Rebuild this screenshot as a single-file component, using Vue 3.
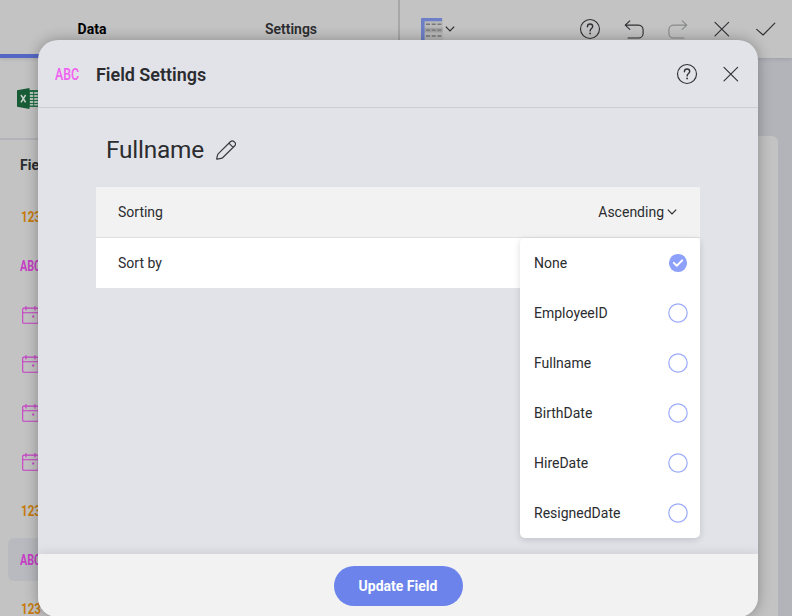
<script setup>
const fields = ['num', 'text', 'date', 'date', 'date', 'date', 'num', 'text', 'num']
const options = ['None', 'EmployeeID', 'Fullname', 'BirthDate', 'HireDate', 'ResignedDate']
const selected = 'None'
const selectedField = 7
</script>

<template>
  <div class="app">
    <header class="topbar">
      <div class="tabs">
        <div class="tab active">Data</div>
        <div class="tab">Settings</div>
      </div>
      <div class="tools">
        <div class="viz">
          <svg width="22" height="22" viewBox="0 0 22 22">
            <rect width="22" height="22" rx="1" fill="#b9b9b9" />
            <path d="M3.5 12.1h18" stroke="#a3a3a3" stroke-width="4.6" />
            <path d="M5 6.3h16M5 12.1h16M5 18h16" stroke="#777" stroke-width="1.4" stroke-dasharray="4 1.7" />
            <path d="M0 1a1 1 0 0 1 1-1h20v3.2H3.6V22H0z" fill="#6d7fc6" />
          </svg>
          <svg class="chev" width="10" height="6" viewBox="0 0 10 6"><path d="M.8.7 5 4.9 9.2.7" /></svg>
        </div>
        <div class="actions">
          <svg class="line" width="22" height="22" viewBox="0 0 22 22">
            <circle cx="11" cy="11" r="9.5" />
            <path class="q" d="M8.4 8.7c0-1.7 1.1-2.7 2.7-2.7s2.6 1 2.6 2.4c0 2.1-2.6 2-2.6 4.5" />
            <circle class="dot" cx="11.1" cy="15.4" r=".9" />
          </svg>
          <svg class="line" width="22" height="22" viewBox="0 0 22 22">
            <path d="M6.8 2.9 2.2 7.1l4.6 4.2M2.2 7.1h13.3a4.6 4.6 0 0 1 4.6 4.6v3.7a4.6 4.6 0 0 1-4.6 4.6H5.1" />
          </svg>
          <svg class="line faint" width="22" height="22" viewBox="0 0 22 22">
            <path d="m15.2 2.9 4.6 4.2-4.6 4.2M19.8 7.1H6.5a4.6 4.6 0 0 0-4.6 4.6v3.7a4.6 4.6 0 0 0 4.6 4.6h10.4" />
          </svg>
          <svg class="line" width="22" height="22" viewBox="0 0 22 22"><path d="m4 4.3 13.6 13.6M17.6 4.3 4 17.9" /></svg>
          <svg class="line" width="22" height="22" viewBox="0 0 22 22"><path d="m1.7 11.4 6.4 5.6L19.8 5.2" /></svg>
        </div>
      </div>
    </header>
    <div class="workspace">
      <aside class="sidebar">
        <div class="source">
          <svg width="23" height="21" viewBox="0 0 23 21">
            <path d="M10 2h13v17H10z" fill="#247147" />
            <path d="M12.8 4h3.4v2h-3.4zm4.4 0h3.6v2h-3.6zM12.8 7h3.4v2h-3.4zm4.4 0h3.6v2h-3.6zM12.8 10h3.4v2h-3.4zm4.4 0h3.6v2h-3.6zM12.8 13h3.4v2h-3.4zm4.4 0h3.6v2h-3.6zM12.8 16h3.4v1.5h-3.4zm4.4 0h3.6v1.5h-3.6z" fill="#b9c8be" />
            <path d="M0 2.2 12.5 0v21L0 18.8z" fill="#185c37" />
            <path d="m4 7 4.6 7.4M8.6 7 4 14.4" stroke="#c8d0ca" stroke-width="1.5" />
          </svg>
        </div>
        <div class="heading">Fields</div>
        <div class="fields">
          <div v-for="(f, i) in fields" :key="i" class="field" :class="{ chosen: i === selectedField }">
            <span v-if="f !== 'date'" class="type" :class="f">{{ f === 'num' ? '123' : 'ABC' }}</span>
            <svg v-else class="cal" width="17" height="18" viewBox="0 0 17 18">
              <rect x=".7" y="2.1" width="15.6" height="15.2" rx="1" />
              <path d="M.7 6.8h15.6M4 0v4.5M13 0v4.5" />
              <rect class="day" x="10.2" y="9.5" width="2" height="2" />
            </svg>
          </div>
        </div>
      </aside>
      <main class="canvas"><div class="sheet"></div></main>
    </div>

    <section class="modal">
      <header class="modal-head">
        <span class="type text bright">ABC</span>
        <h1>Field Settings</h1>
        <svg class="line" width="22" height="22" viewBox="0 0 22 22">
          <circle cx="11" cy="11" r="9.5" />
          <path class="q" d="M8.4 8.7c0-1.7 1.1-2.7 2.7-2.7s2.6 1 2.6 2.4c0 2.1-2.6 2-2.6 4.5" />
          <circle class="dot" cx="11.1" cy="15.4" r=".9" />
        </svg>
        <svg class="line" width="22" height="22" viewBox="0 0 22 22"><path d="m4 4.3 13.6 13.6M17.6 4.3 4 17.9" /></svg>
      </header>
      <div class="modal-body">
        <div class="title">
          <h2>Fullname</h2>
          <svg width="20" height="20" viewBox="0 0 20 20">
            <path d="M1.1 19.2Q.6 19.3.7 18.7L1.6 15Q1.8 14.2 2.4 13.6L14.6 1.5a2.3 2.3 0 0 1 3.3 0l.9.9a2.3 2.3 0 0 1 0 3.3L6.6 17.7q-.6.6-1.4.7zM12.9 3.2l4.2 4.2" />
          </svg>
        </div>
        <div class="settings">
          <div class="row shaded">
            <span>Sorting</span>
            <span class="value">Ascending
              <svg class="chev" width="10" height="6" viewBox="0 0 10 6"><path d="M.8.7 5 4.9 9.2.7" /></svg>
            </span>
          </div>
          <div class="row"><span>Sort by</span></div>
          <div class="menu">
            <div v-for="o in options" :key="o" class="option">
              <span>{{ o }}</span>
              <svg width="20" height="20" viewBox="0 0 20 20">
                <template v-if="o === selected">
                  <circle cx="10" cy="10" r="9.1" fill="#8da0fa" />
                  <path d="m5.8 9.9 3 2.9 5.4-5.4" fill="none" stroke="#fff" stroke-width="2" stroke-linecap="round" stroke-linejoin="round" />
                </template>
                <circle v-else cx="10" cy="10" r="9.2" fill="#fff" stroke="#9cacfb" stroke-width="1.2" />
              </svg>
            </div>
          </div>
        </div>
      </div>
      <footer class="modal-foot"><button>Update Field</button></footer>
    </section>
  </div>
</template>

<style>
body { background: #fff; }
</style>

<style scoped>
* { box-sizing: border-box; }
.app { position: relative; width: 792px; height: 616px; overflow: hidden; display: flex; flex-direction: column; font-family: Roboto, sans-serif; font-size: 14px; color: #2b2c2f; background: #b3b4ba; }
svg { display: block; flex: none; }
.topbar { display: flex; height: 58px; flex: none; background: #c3c3c3; z-index: 1; box-shadow: 0 1px 4px rgba(0, 0, 0, .12); }
.tabs { display: flex; width: 400px; border-right: 2px solid #a7a7a7; }
.tab { flex: 1; display: flex; align-items: center; justify-content: center; font-weight: 600; border-bottom: 4px solid transparent; padding: 4px 0 0 1px; }
.tab:first-child { flex: 0 0 183px; }
.tab.active { color: #000; font-weight: 700; border-color: #5467c4; }
.tools { flex: 1; display: flex; justify-content: space-between; padding: 18px 15px 0 21px; }
.viz { display: flex; gap: 2px; align-items: center; height: 22px; }
.actions { display: flex; gap: 22px; }
.chev path { fill: none; stroke: #2b2c2f; stroke-width: 1.2; }
.line { fill: none; stroke: #303134; stroke-width: 1.15; stroke-linecap: round; stroke-linejoin: round; }
.line.faint { stroke: #88898a; }
.line .q { stroke-width: 1.4; }
.line .dot { fill: #303134; stroke: none; }
.workspace { display: flex; flex: 1; min-height: 0; }
.sidebar { width: 300px; background: #c3c3c3; }
.source { height: 82px; padding: 30px 0 0 17px; border-bottom: 2px solid #b3b3b9; }
.heading { height: 55px; padding: 17px 0 0 20px; line-height: 16px; font-weight: 700; }
.fields { padding-left: 8px; }
.field { height: 43px; margin-bottom: 6px; padding-left: 13px; display: flex; align-items: center; border-radius: 6px; }
.field.chosen { background: #b9babf; }
.type { font-weight: 700; font-size: 14px; line-height: 16px; transform-origin: left center; }
.type.num { color: #c77b0b; transform: scaleX(.83); }
.type.text { margin-left: -1px; color: #c63fc5; transform: scaleX(.77); }
.type.bright { width: 41px; margin: 0; color: #f065ef; font-weight: 600; transform: scale(.88, 1.18); }
.cal { margin-left: 1px; fill: none; stroke: #c63fc5; stroke-width: 1.1; }
.cal .day { fill: #c63fc5; stroke: none; }
.canvas { flex: 1; padding: 78px 14px 0 0; display: flex; }
.sheet { flex: 1; background: #c3c3c3; border-radius: 6px 6px 0 0; }
.modal { position: absolute; z-index: 2; left: 38px; top: 40px; width: 720px; height: 577px; display: flex; flex-direction: column; background: #e2e3e9; border-radius: 20px; overflow: hidden; box-shadow: 0 0 14px rgba(0, 0, 0, .3); }
.modal-head { display: flex; align-items: center; height: 68px; flex: none; padding: 1px 16px 0 17px; border-bottom: 1px solid #cccdd2; }
.modal-head h1 { flex: 1; margin: 0; font-size: 18px; font-weight: 600; line-height: 22px; padding-top: 1px; letter-spacing: -.03px; }
.modal-head svg + svg { margin-left: 22px; }
.modal-body { flex: 1; padding: 25px 58px 0; }
.title { display: flex; align-items: center; height: 34px; margin-bottom: 20px; padding-left: 10px; gap: 12px; }
.title h2 { margin: 0; font-size: 24.4px; font-weight: 400; line-height: 32px; letter-spacing: -.2px; }
.title svg { fill: none; stroke: #3a3b3e; stroke-width: 1.2; stroke-linejoin: round; }
.settings { position: relative; width: 604px; }
.row { height: 50px; display: flex; align-items: center; justify-content: space-between; padding: 0 23px 0 22px; background: #fff; }
.row.shaded { height: 51px; background: #f2f2f2; border-bottom: 1px solid #dfdfdf; }
.value { display: flex; align-items: center; gap: 3px; }
.menu { position: absolute; top: 51px; right: 0; width: 180px; background: #fff; border-radius: 5px; box-shadow: 0 2px 7px rgba(0, 0, 0, .14); }
.option { height: 50px; padding: 0 12px 0 14px; display: flex; align-items: center; justify-content: space-between; }
.modal-foot { display: flex; justify-content: center; height: 63px; flex: none; padding-top: 12px; background: #f2f2f2; box-shadow: 0 -1px 10px rgba(0, 0, 0, .1); }
button { width: 129px; height: 40px; border: 0; border-radius: 20px; background: #6b83eb; color: #fff; font: 700 14px Roboto, sans-serif; padding: 0; }
</style>
